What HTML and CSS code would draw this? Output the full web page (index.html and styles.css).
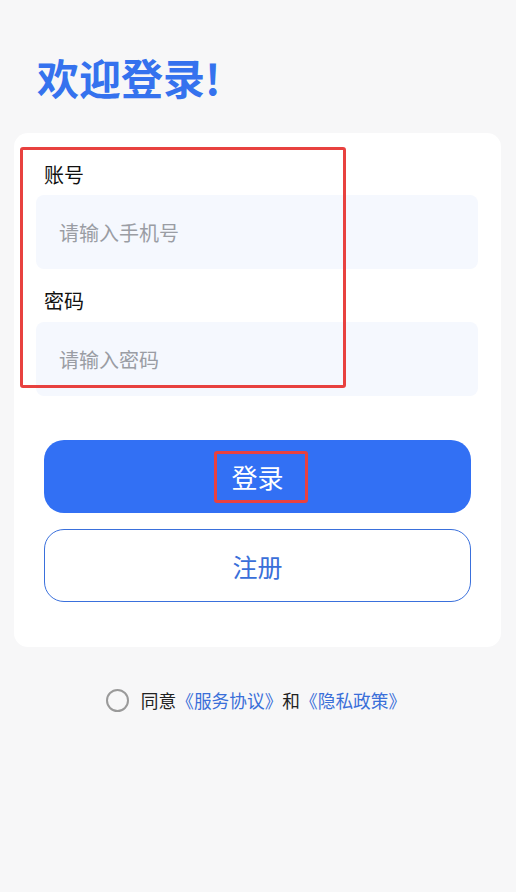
FILE: index.html
```html
<!DOCTYPE html>
<html lang="zh-CN">
<head>
<meta charset="utf-8">
<title>欢迎登录</title>
<link rel="stylesheet" href="styles.css">
</head>
<body>
<div class="page">
  <h1 class="title">欢迎登录!</h1>
  <div class="card">
    <div class="mark mark-fields"></div>
    <div class="field">
      <div class="label">账号</div>
      <div class="input">请输入手机号</div>
    </div>
    <div class="field field-second">
      <div class="label">密码</div>
      <div class="input">请输入密码</div>
    </div>
    <div class="actions">
      <div class="btn btn-primary">登录<span class="mark mark-btn"></span></div>
      <div class="btn btn-outline">注册</div>
    </div>
  </div>
  <div class="agree">
    <span class="radio"></span>
    <span class="agree-text">同意<span class="link">《服务协议》</span>和<span class="link">《隐私政策》</span></span>
  </div>
</div>
</body>
</html>
```

FILE: styles.css
```css
html, body {
  margin: 0;
  padding: 0;
}
body {
  background: #f7f7f8;
  font-family: "Noto Sans CJK SC", "Noto Sans", sans-serif;
  width: 516px;
  height: 892px;
  overflow: hidden;
}
.page {
  display: flex;
  flex-direction: column;
}
.title {
  margin: 52px 0 0 37px;
  font-size: 42px;
  line-height: 50px;
  font-weight: 700;
  color: #3572ee;
}
.card {
  position: relative;
  margin: 31px 0 0 14px;
  width: 487px;
  background: #ffffff;
  border-radius: 14px;
  padding: 28px 23px 45px 22px;
  box-sizing: border-box;
}
.field {
  display: flex;
  flex-direction: column;
}
.field-second {
  margin-top: 18px;
}
.label {
  font-size: 20px;
  line-height: 28px;
  color: #111111;
  padding-left: 8px;
  margin-bottom: 6px;
}
.field-second .label {
  margin-bottom: 7px;
}
.input {
  height: 74px;
  background: #f5f8fe;
  border-radius: 8px;
  padding-left: 23px;
  display: flex;
  align-items: center;
  font-size: 20px;
  color: #9a9da4;
}
.actions {
  display: flex;
  flex-direction: column;
  gap: 16px;
  margin: 44px 7px 0 8px;
}
.btn {
  position: relative;
  height: 73px;
  border-radius: 20px;
  display: flex;
  align-items: center;
  justify-content: center;
  font-size: 26px;
  box-sizing: border-box;
}
.btn-primary {
  background: #3270f4;
  color: #ffffff;
}
.btn-outline {
  background: #ffffff;
  border: 1.5px solid #3a70dc;
  color: #3a6fd9;
  font-size: 25px;
}
.mark {
  position: absolute;
  border: 3px solid #e8413f;
  border-radius: 3px;
  box-sizing: border-box;
  pointer-events: none;
}
.mark-fields {
  left: 6px;
  top: 14px;
  width: 326px;
  height: 241px;
}
.mark-btn {
  left: 170px;
  top: 11px;
  width: 94px;
  height: 52px;
}
.agree {
  display: flex;
  align-items: center;
  justify-content: center;
  margin-top: 41px;
  gap: 12px;
  padding-right: 4px;
}
.radio {
  width: 23px;
  height: 23px;
  border: 2px solid #9a9a9a;
  border-radius: 50%;
  box-sizing: border-box;
}
.agree-text {
  font-size: 17.7px;
  line-height: 24px;
  color: #222222;
}
.link {
  color: #3a6fd9;
}
```
